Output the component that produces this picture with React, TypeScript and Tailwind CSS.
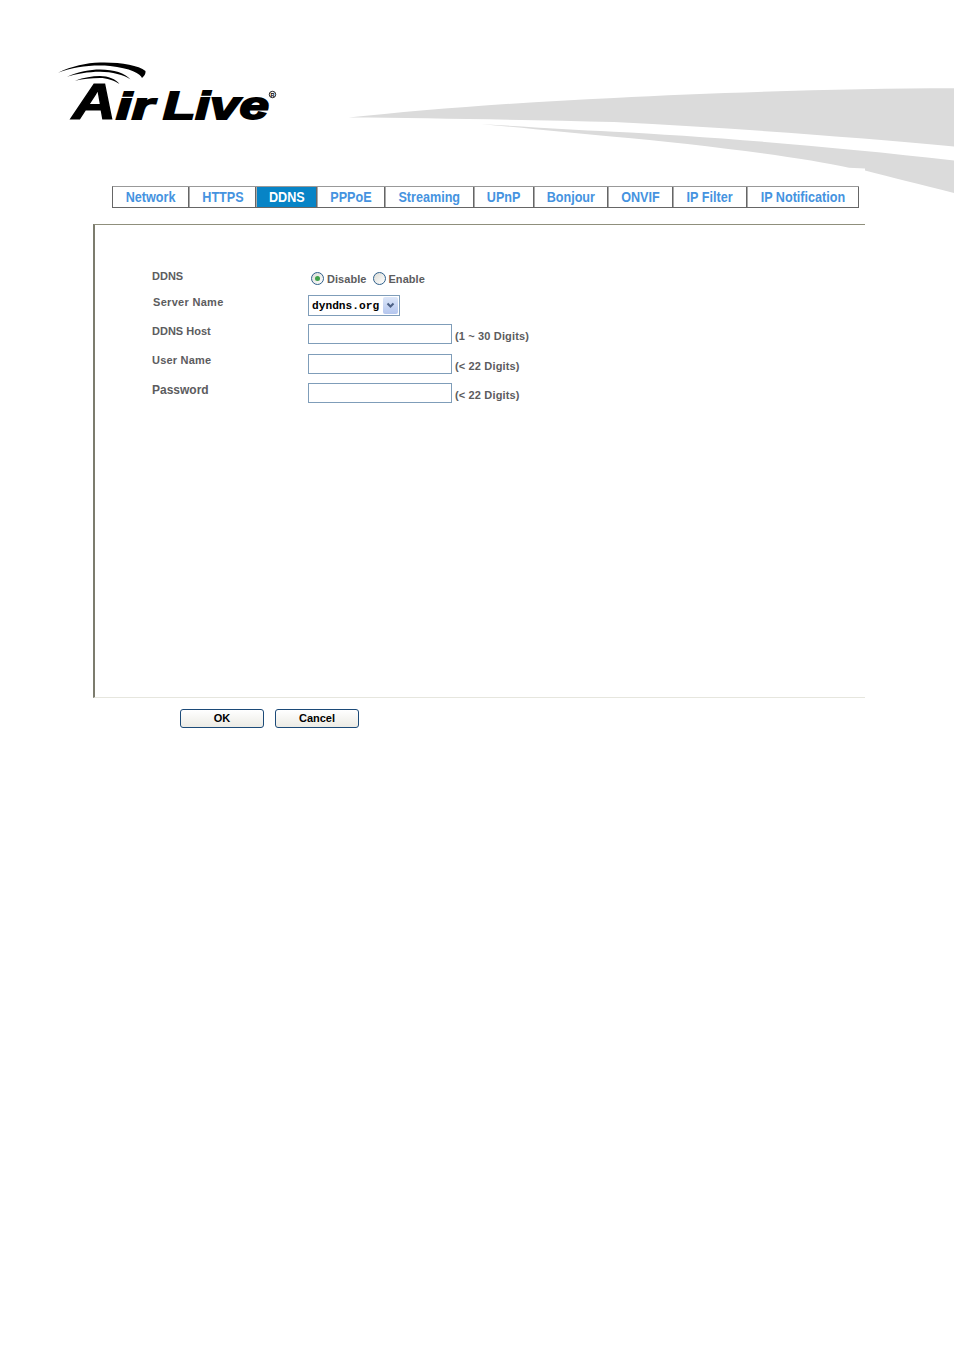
const tabs = [
  { label: 'Network', width: 'w-[76px]' },
  { label: 'HTTPS', width: 'w-[67px]' },
  { label: 'DDNS', width: 'w-[61px]', active: true },
  { label: 'PPPoE', width: 'w-[68px]' },
  { label: 'Streaming', width: 'w-[89px]' },
  { label: 'UPnP', width: 'w-[60px]' },
  { label: 'Bonjour', width: 'w-[74px]' },
  { label: 'ONVIF', width: 'w-[65px]' },
  { label: 'IP Filter', width: 'w-[74px]' },
  { label: 'IP Notification', width: 'w-[112px]' },
];

const labelClass = "w-[156px] font-['Liberation_Sans',sans-serif] font-bold leading-4 text-[#5c5c5e]";
const hintClass = "ml-[3px] font-['Liberation_Sans',sans-serif] text-[11px] font-bold leading-4 tracking-[0.15px] text-[#5c5c5e]";
const inputClass = 'h-5 w-[144px] border border-[#7f9db9] bg-white';
const buttonClass = "h-[19px] w-[84px] rounded-[3px] border border-[#1c4a78] bg-gradient-to-b from-white to-[#ecebe5] font-['Liberation_Sans',sans-serif] text-[11px] font-bold text-black";

function Logo() {
  return (
    <svg viewBox="50 50 240 90" className="h-[90px] w-[240px]">
      <path d="M58 72.7C72 66 86 63 100 62.5C120 62 138 65 145.5 71C146 74 144 76 142 78C141 74 130 68 110 66C92 64.5 74 67 58 72.7Z" fill="#000" />
      <path d="M67 76.7C78 72 90 69.5 100 69.5C114 69.5 125 73 130.5 79.5C124 75 112 71.8 100 71.8C88 71.8 76 74 67 76.7Z" fill="#000" />
      <path d="M75 80.7C84 77.5 92 76 100 76C108 76 116 79 119.5 84C114 80.5 107 78 100 78C91 78 83 79 75 80.7Z" fill="#000" />
      <g fontFamily="'Liberation Sans', sans-serif" fontWeight="700" fontStyle="italic" fill="#000" stroke="#000">
        <text x="72" y="118.5" fontSize="50" strokeWidth="1.2" textLength="44" lengthAdjust="spacingAndGlyphs">A</text>
        <text x="116" y="118.5" fontSize="37" strokeWidth="1.8" textLength="38" lengthAdjust="spacingAndGlyphs">ir</text>
        <text x="163" y="118.5" fontSize="38" strokeWidth="1.8" textLength="106" lengthAdjust="spacingAndGlyphs">Live</text>
      </g>
      <circle cx="272.5" cy="94.5" r="3.2" fill="none" stroke="#000" strokeWidth="0.9" />
      <text x="270.6" y="96.6" fontSize="5.5" fontWeight="700" fontFamily="'Liberation Sans', sans-serif" fill="#000">R</text>
    </svg>
  );
}

function Swoosh() {
  return (
    <svg viewBox="348 86 606 110" className="absolute left-[348px] top-[86px] h-[110px] w-[606px]">
      <path d="M348.5 117.5C420 110 520 102 614 98C720 92.5 850 88.5 954 88.3V146.5C860 137.5 740 128.5 614 122C530 120 430 118 348.5 117.5Z" fill="#dbdbdb" />
      <path d="M481 124C530 127 570 129.5 614 131.7C700 136 830 146 954 160.5V193C920 184.5 890 177 865 170.5V168.5L849 167.7C800 157 690 143 614 136.7C570 133 530 128.5 481 124Z" fill="#dbdbdb" />
    </svg>
  );
}

function Radio({ checked }: { checked?: boolean }) {
  return (
    <span className="flex h-[13px] w-[13px] -translate-y-px items-center justify-center rounded-full border border-[#2f5f8a] bg-gradient-to-br from-[#dcdcd6] to-white">
      {checked && <span className="h-[5px] w-[5px] rounded-full bg-[#3fa14b]" />}
    </span>
  );
}

export default function App() {
  return (
    <div className="h-[1350px] w-[954px] overflow-hidden bg-white">
      <div className="relative h-[186px] pl-[50px] pt-[50px]">
        <Swoosh />
        <div className="relative h-[90px] w-[240px]">
          <Logo />
        </div>
      </div>

      <div className="ml-[112px] flex h-[22px] w-[747px] border-b border-l border-t border-b-[#666] border-l-[#666] border-t-[#999]">
        {tabs.map((tab) => (
          <div
            key={tab.label}
            className={`flex items-center justify-center border-l border-r border-l-[#aaa] border-r-[#666] font-['Liberation_Sans',sans-serif] text-[14px] font-bold first:border-l-0 ${tab.width} ${
              tab.active ? 'bg-[#0784c6] text-white' : 'text-[#4593e0]'
            }`}
          >
            <span className="inline-block scale-x-90 whitespace-nowrap">{tab.label}</span>
          </div>
        ))}
      </div>

      <div className="ml-[93px] mt-4 h-[474px] w-[772px] border-b border-l-2 border-t border-b-[#e6e6de] border-l-[#7c7c6e] border-t-[#8f8f7c] pl-[57px] pt-[41px]">
        <div className="flex h-[26px]">
          <div className={`${labelClass} pt-[2px] text-[11px]`}>DDNS</div>
          <div className="flex items-center pl-[3px] pt-[1px] font-['Liberation_Sans',sans-serif] text-[11px] font-bold tracking-[0.05px] text-[#5c5c5e]">
            <Radio checked />
            <span className="ml-[3px] mr-[7px]">Disable</span>
            <Radio />
            <span className="ml-[2px]">Enable</span>
          </div>
        </div>

        <div className="flex h-7">
          <div className={`${labelClass} pl-px pt-[2px] text-[11px] tracking-[0.3px]`}>Server Name</div>
          <div className="mt-[3px] flex h-[21px] w-[92px] items-center justify-between border border-[#7f9db9] bg-white pl-[3px] pr-px">
            <span className="font-['Liberation_Mono',monospace] text-[11.2px] font-bold leading-4 text-black">dyndns.org</span>
            <span className="flex h-[17px] w-[15px] items-center justify-center rounded-[2px] bg-gradient-to-b from-[#dce6f8] to-[#b4c6ee]">
              <svg viewBox="0 0 9 7" className="h-[7px] w-[9px]">
                <path d="M1.5 1.5L4.5 4.5L7.5 1.5" fill="none" stroke="#4d6185" strokeWidth="2" />
              </svg>
            </span>
          </div>
        </div>

        <div className="flex h-[30px]">
          <div className={`${labelClass} pt-[3px] text-[11px]`}>DDNS Host</div>
          <div className={`${inputClass} mt-1`} />
          <div className={`${hintClass} pt-2`}>(1 ~ 30 Digits)</div>
        </div>

        <div className="flex h-[30px]">
          <div className={`${labelClass} pt-[2px] text-[11px] tracking-[0.2px]`}>User Name</div>
          <div className={`${inputClass} mt-1`} />
          <div className={`${hintClass} pt-2`}>(&lt; 22 Digits)</div>
        </div>

        <div className="flex h-[30px]">
          <div className={`${labelClass} pt-[2px] text-[12px]`}>Password</div>
          <div className={`${inputClass} mt-[3px]`} />
          <div className={`${hintClass} pt-[7px]`}>(&lt; 22 Digits)</div>
        </div>
      </div>

      <div className="ml-[180px] mt-[11px] flex gap-[11px]">
        <button className={buttonClass}>OK</button>
        <button className={buttonClass}>Cancel</button>
      </div>
    </div>
  );
}
